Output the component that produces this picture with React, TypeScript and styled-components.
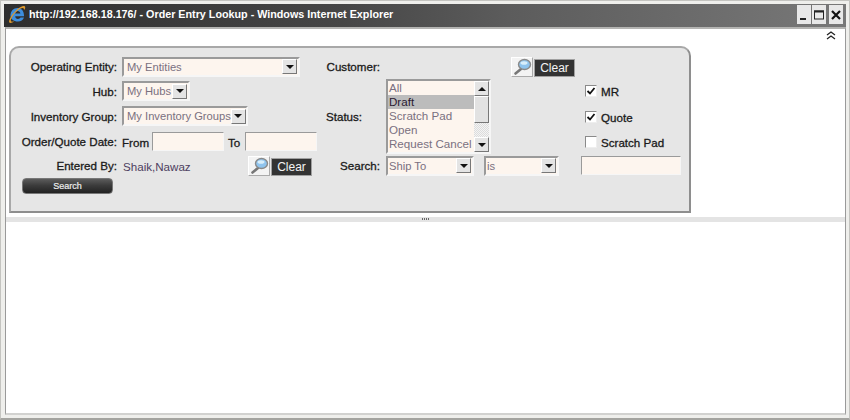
import React from 'react'
import styled, { createGlobalStyle } from 'styled-components'

const GlobalStyle = createGlobalStyle`
  html, body {
    margin: 0;
    padding: 0;
    background: #fff;
  }
  body {
    font-family: "Liberation Sans", Arial, sans-serif;
    font-size: 11.6px;
  }
`

const Window = styled.div`
  width: 850px;
  height: 420px;
  box-sizing: border-box;
  display: flex;
  flex-direction: column;
  background: #efefec;
  border: 1px solid #c4c4c0;
  border-bottom: 2px solid #a4a4a0;
  padding: 3px 3px 3px 4px;
  overflow: hidden;
`

const TitleBar = styled.div`
  height: 23px;
  flex: none;
  margin-left: -1px;
  display: flex;
  align-items: flex-start;
  padding-left: 4px;
  background: linear-gradient(90deg, #2e2e2e 0%, #464646 40%, #5c5c5c 60%, #787878 100%);
`

const Title = styled.div`
  margin: 4px 0 0 3px;
  color: #fff;
  font-weight: bold;
  font-size: 10.75px;
  white-space: nowrap;
  flex: 1;
`

const WinButtons = styled.div`
  display: flex;
  margin: 1px 3px 0 0;
  gap: 1px;
`

const WinButton = styled.div<{ $gap?: boolean }>`
  width: 14px;
  height: 19px;
  margin-left: ${p => (p.$gap ? '2px' : '0')};
  background: #e8e8e8;
  display: flex;
  align-items: center;
  justify-content: center;
`

const Content = styled.div`
  flex: 1;
  background: #fff;
  border-top: 2px solid #b4b4b2;
  border-bottom: 2px solid #d2d2d0;
  border-left: 1px solid #9a9a9a;
  border-right: 1px solid #9a9a9a;
  display: flex;
  flex-direction: column;
  min-height: 0;
`

const Collapse = styled.div`
  height: 14px;
  flex: none;
  display: flex;
  justify-content: flex-end;
  padding: 2px 9px 0 0;
  box-sizing: border-box;
`

const Panel = styled.div`
  width: 682px;
  height: 167px;
  flex: none;
  margin: 3px 0 0 3px;
  box-sizing: border-box;
  background: #e6e6e6;
  border: 2px solid #8e8e8e;
  border-color: #a8a8a8 #8e8e8e #8e8e8e #a8a8a8;
  border-radius: 10px 10px 0 0;
  padding: 6px 0 0 0;
  display: grid;
  grid-template-columns: 106px 199px 64px 200px 1fr;
  grid-template-rows: 25px 24px 26px 24px 25px 20px;
`

const Label = styled.div`
  display: flex;
  align-items: center;
  justify-content: flex-end;
  color: #1a1a1a;
  -webkit-text-stroke: 0.3px #1a1a1a;
  white-space: nowrap;
`

const MidLabel = styled(Label)<{ $left?: boolean }>`
  justify-content: ${p => (p.$left ? 'flex-start' : 'flex-end')};
  padding-left: ${p => (p.$left ? '10px' : '0')};
`

const Field = styled.div`
  display: flex;
  align-items: center;
  padding-left: 5px;
`

const DateLabel = styled.span<{ $pad: number }>`
  color: #1a1a1a;
  -webkit-text-stroke: 0.3px #1a1a1a;
  flex: none;
  padding: 2px ${p => p.$pad}px 0 0;
`

const SelectBox = styled.div<{ $w: number; $indent: number }>`
  width: ${p => p.$w}px;
  height: 20px;
  flex: none;
  box-sizing: border-box;
  background: #fdf5ee;
  border: 2px solid #9a9a9a;
  border-right-color: #f6f6f6;
  border-bottom-color: #f6f6f6;
  display: flex;
  align-items: center;
  justify-content: space-between;
  color: #7a7080;
  font-size: 11.2px;
  padding: 0 1px 0 ${p => p.$indent}px;
  white-space: nowrap;
`

const ArrowBtn = styled.div`
  width: 15px;
  height: 15px;
  box-sizing: border-box;
  flex: none;
  background: #e4e4e4;
  border: 1px solid #fff;
  border-right-color: #777;
  border-bottom-color: #777;
  display: flex;
  align-items: center;
  justify-content: center;
`

const Arrow = styled.span<{ $up?: boolean }>`
  width: 0;
  height: 0;
  border-left: 4px solid transparent;
  border-right: 4px solid transparent;
  border-${p => (p.$up ? 'bottom' : 'top')}: 4px solid #111;
`

const TextBox = styled.div<{ $w: number; $gap?: number }>`
  width: ${p => p.$w}px;
  height: 19px;
  flex: none;
  margin-right: ${p => p.$gap ?? 0}px;
  box-sizing: border-box;
  background: #fdf5ee;
  border: 1px solid #9a9a9a;
  border-right-color: #f6f6f6;
  border-bottom-color: #f6f6f6;
`

const LookupGroup = styled.div`
  display: flex;
  align-items: center;
  gap: 1px;
`

const IconButton = styled.div`
  width: 22px;
  height: 20px;
  box-sizing: border-box;
  background: #f3f3f3;
  border: 1px solid #fff;
  border-right-color: #aaa;
  border-bottom-color: #aaa;
  display: flex;
  align-items: center;
  justify-content: center;
`

const ClearButton = styled.div`
  width: 41px;
  height: 18px;
  margin-top: 2px;
  box-sizing: border-box;
  background: #333;
  border: 1px solid #a0a0a0;
  color: #f4f4f4;
  font-size: 12px;
  display: flex;
  align-items: center;
  justify-content: center;
`

const EnteredBy = styled.span`
  color: #4d4060;
  width: 126px;
  flex: none;
  padding: 2px 0 0 1px;
  box-sizing: border-box;
`

const ListCell = styled.div`
  grid-column: 4;
  grid-row: 2 / span 3;
  padding-left: 6px;
`

const ListBox = styled.div`
  width: 105px;
  height: 75px;
  box-sizing: border-box;
  display: flex;
  background: #fdf5ee;
  border: 2px solid #9a9a9a;
  border-right-color: #f6f6f6;
  border-bottom-color: #f6f6f6;
`

const Options = styled.div`
  width: 86px;
  flex: none;
  overflow: hidden;
`

const Option = styled.div<{ $selected?: boolean }>`
  height: 14px;
  line-height: 14px;
  padding-left: 1px;
  white-space: nowrap;
  color: ${p => (p.$selected ? '#2a1a30' : '#7a7080')};
  background: ${p => (p.$selected ? '#bcbcbc' : 'transparent')};
`

const Scrollbar = styled.div`
  width: 15px;
  flex: none;
  display: flex;
  flex-direction: column;
`

const Thumb = styled.div`
  height: 27px;
  flex: none;
  box-sizing: border-box;
  background: #e2e2e2;
  border: 1px solid #fff;
  border-right-color: #777;
  border-bottom-color: #777;
`

const Track = styled.div`
  flex: 1;
  background: repeating-conic-gradient(#dcdcdc 0 25%, #f4f4f4 0 50%) 0 0 / 2px 2px;
`

const CheckRow = styled.label<{ $drop?: number }>`
  display: flex;
  align-items: center;
  padding: ${p => p.$drop ?? 0}px 0 0 5px;
  gap: 4px;
  color: #1a1a1a;
  -webkit-text-stroke: 0.3px #1a1a1a;
  white-space: nowrap;
`

const CheckBox = styled.span`
  width: 12px;
  height: 12px;
  box-sizing: border-box;
  background: #fff;
  border: 1px solid #8a8a8a;
  border-right-color: #eee;
  border-bottom-color: #eee;
  display: flex;
  align-items: center;
  justify-content: center;
`

const SearchFields = styled.div`
  grid-column: 4 / span 2;
  display: flex;
  align-items: center;
  padding-left: 6px;
`

const SelectGap = styled.div<{ $w: number }>`
  width: ${p => p.$w}px;
  flex: none;
`

const CustomerLookup = styled.div`
  grid-column: 4;
  display: flex;
  align-items: center;
  justify-content: flex-end;
  padding-right: 5px;
`

const SearchCell = styled.div`
  grid-column: 1 / span 2;
  padding-left: 11px;
  display: flex;
  align-items: flex-start;
`

const SearchButton = styled.div`
  width: 91px;
  height: 16px;
  border-radius: 4px;
  background: linear-gradient(180deg, #5c5c5c 0%, #3c3c3c 45%, #222 100%);
  border: 1px solid #777;
  box-sizing: border-box;
  color: #eee;
  font-size: 9px;
  -webkit-text-stroke: 0.2px #eee;
  display: flex;
  align-items: center;
  justify-content: center;
`

const Splitter = styled.div`
  height: 5px;
  flex: none;
  margin-top: 4px;
  background: #e4e4e4;
  display: flex;
  justify-content: center;
  padding-top: 1px;
  box-sizing: border-box;
`

const Grip = styled.div`
  width: 8px;
  height: 2px;
  background: repeating-linear-gradient(90deg, #666 0 1px, #e4e4e4 1px 2px);
`

const IeIcon = () => (
  <svg width="18" height="20" viewBox="0 0 18 20">
    <path
      d="M2.500 11.500C2.500 7 5.500 4 9.500 4s6.500 3 6.500 7.500v.8H7.200c.2 1.700 1.200 2.600 2.800 2.600 1.100 0 2-.4 2.500-1.300H16c-.9 2.500-3.200 3.900-6 3.900-4.500 0-7.500-2.500-7.500-6Zm4.700-2h5.200c-.2-1.500-1.300-2.400-2.600-2.400s-2.400.9-2.600 2.400Z"
      fill="#3d8ede"
    />
    <path
      d="M1.300 18.500C0 16.500 4.500 9.500 9 5.500c3.600-3 6.800-4.200 7.900-3.100.7.700.3 2.200-.6 3.600-.3-1.500-1-2.100-2.100-2C10.500 4.500 4.500 11 3 15.500c-.3 1-.2 1.900.4 2.100.8.300 2-.2 3.100-.9-1.900 1.800-4.200 3-5.200 1.800Z"
      fill="#e09a2c"
    />
  </svg>
)

const LensIcon = () => (
  <svg width="19" height="18" viewBox="0 0 19 18">
    <path d="M8 11 2.500 15.500" stroke="#777" strokeWidth="2.600" strokeLinecap="round" />
    <ellipse cx="11.500" cy="6.500" rx="6" ry="5" fill="#8fc4ee" stroke="#8a8a8a" strokeWidth="1.400" />
    <ellipse cx="11" cy="5" rx="3.500" ry="1.800" fill="#d8eefb" />
  </svg>
)

const Tick = () => (
  <svg width="10" height="10" viewBox="0 0 10 10">
    <path d="M1.500 5 4 7.500 8.500 2" fill="none" stroke="#111" strokeWidth="1.800" />
  </svg>
)

const Lookup = () => (
  <LookupGroup>
    <IconButton>
      <LensIcon />
    </IconButton>
    <ClearButton>Clear</ClearButton>
  </LookupGroup>
)

const Select = ({
  w,
  indent = 3,
  children,
}: {
  w: number
  indent?: number
  children: React.ReactNode
}) => (
  <SelectBox $w={w} $indent={indent}>
    {children}
    <ArrowBtn>
      <Arrow />
    </ArrowBtn>
  </SelectBox>
)

const statuses = ['All', 'Draft', 'Scratch Pad', 'Open', 'Request Cancel']

export default function App() {
  return (
    <>
      <GlobalStyle />
      <Window>
        <TitleBar>
          <IeIcon />
          <Title>http://192.168.18.176/ - Order Entry Lookup - Windows Internet Explorer</Title>
          <WinButtons>
            <WinButton>
              <svg width="10" height="12" viewBox="0 0 10 12">
                <rect x="1" y="9" width="6" height="2" fill="#222" />
              </svg>
            </WinButton>
            <WinButton>
              <svg width="10" height="10" viewBox="0 0 10 10">
                <rect x="0.500" y="1" width="9" height="8" fill="none" stroke="#222" />
                <rect x="0" y="0.500" width="10" height="2" fill="#222" />
              </svg>
            </WinButton>
            <WinButton $gap>
              <svg width="10" height="10" viewBox="0 0 10 10">
                <path d="M1 1 9 9M9 1 1 9" stroke="#111" strokeWidth="2.200" />
              </svg>
            </WinButton>
          </WinButtons>
        </TitleBar>
        <Content>
          <Collapse>
            <svg width="10" height="9" viewBox="0 0 10 9">
              <path d="M1 4 5 1 9 4M1 8 5 5 9 8" fill="none" stroke="#222" strokeWidth="1.300" />
            </svg>
          </Collapse>
          <Panel>
            <Label>Operating Entity:</Label>
            <Field>
              <Select w={178}>My Entities</Select>
            </Field>
            <MidLabel>Customer:</MidLabel>
            <CustomerLookup>
              <Lookup />
            </CustomerLookup>
            <div />

            <Label>Hub:</Label>
            <Field>
              <Select w={68}>My Hubs</Select>
            </Field>
            <div />
            <ListCell>
              <ListBox>
                <Options>
                  {statuses.map(s => (
                    <Option key={s} $selected={s === 'Draft'}>
                      {s}
                    </Option>
                  ))}
                </Options>
                <Scrollbar>
                  <ArrowBtn>
                    <Arrow $up />
                  </ArrowBtn>
                  <Thumb />
                  <Track />
                  <ArrowBtn>
                    <Arrow />
                  </ArrowBtn>
                </Scrollbar>
              </ListBox>
            </ListCell>
            <CheckRow>
              <CheckBox>
                <Tick />
              </CheckBox>
              MR
            </CheckRow>

            <Label>Inventory Group:</Label>
            <Field>
              <Select w={126}>My Inventory Groups</Select>
            </Field>
            <MidLabel $left>Status:</MidLabel>
            <CheckRow $drop={2}>
              <CheckBox>
                <Tick />
              </CheckBox>
              Quote
            </CheckRow>

            <Label>Order/Quote Date:</Label>
            <Field>
              <DateLabel $pad={3}>From</DateLabel>
              <TextBox $w={72} $gap={4} />
              <DateLabel $pad={5}>To</DateLabel>
              <TextBox $w={72} />
            </Field>
            <div />
            <CheckRow $drop={2}>
              <CheckBox />
              Scratch Pad
            </CheckRow>

            <Label>Entered By:</Label>
            <Field>
              <EnteredBy>Shaik,Nawaz</EnteredBy>
              <Lookup />
            </Field>
            <MidLabel>Search:</MidLabel>
            <SearchFields>
              <Select w={88} indent={1}>
                Ship To
              </Select>
              <SelectGap $w={10} />
              <Select w={75} indent={1}>
                is
              </Select>
              <SelectGap $w={22} />
              <TextBox $w={100} />
            </SearchFields>

            <SearchCell>
              <SearchButton>Search</SearchButton>
            </SearchCell>
          </Panel>
          <Splitter>
            <Grip />
          </Splitter>
        </Content>
      </Window>
    </>
  )
}
